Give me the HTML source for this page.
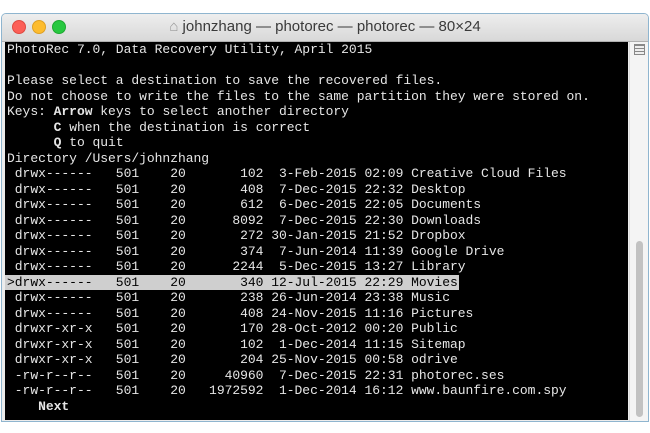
<!DOCTYPE html>
<html><head><meta charset="utf-8"><style>
html,body{margin:0;padding:0;background:#fff;width:650px;height:433px;overflow:hidden}
.win{position:absolute;left:1px;top:13px;width:646px;height:407px;border:1px solid #8fb5cf;border-radius:5px 5px 0 0;background:#ececec;overflow:hidden}
.tb{position:absolute;left:0;top:0;width:646px;height:27px;background:linear-gradient(#eeeeee,#d8d8d8);border-bottom:1px solid #b0b0b0}
.dot{position:absolute;top:6px;width:12px;height:12px;border-radius:50%}
.title{position:absolute;left:0;width:646px;top:4px;text-align:center;font:15px "Liberation Sans",sans-serif;color:#3a3a3a}
.term{position:absolute;left:3px;top:28px;width:623px;height:378px;background:#000}
pre{margin:0;position:absolute;left:2px;top:0;font:13px/15.5px "Liberation Mono",monospace;color:#e6e6e6;letter-spacing:-0.03px}
.hl{background:#cfcfcf;color:#000;display:inline-block;width:452px;margin-left:-2px;padding-left:2px;white-space:pre}
.sb{position:absolute;left:627px;top:28px;width:19px;height:379px;background:#f4f4f4;border-left:1px solid #ddd}
.th{position:absolute;left:634px;top:227px;width:7px;height:176px;border-radius:4px;background:#c2c2c2}
</style></head><body>
<div class="win">
<div class="tb">
<div class="dot" style="left:10px;background:#fc5f57;border:0.5px solid #de4a41"></div>
<div class="dot" style="left:30px;background:#fdbc2e;border:0.5px solid #dea024"></div>
<div class="dot" style="left:50px;background:#28c840;border:0.5px solid #1ea831"></div>
<div class="title"><span style="color:#999">⌂</span> johnzhang — photorec — photorec — 80×24</div>
</div>
<div class="term"><pre>PhotoRec 7.0, Data Recovery Utility, April 2015

Please select a destination to save the recovered files.
Do not choose to write the files to the same partition they were stored on.
Keys: <b>Arrow</b> keys to select another directory
      <b>C</b> when the destination is correct
      <b>Q</b> to quit
Directory /Users/johnzhang
 drwx------   501    20       102  3-Feb-2015 02:09 Creative Cloud Files
 drwx------   501    20       408  7-Dec-2015 22:32 Desktop
 drwx------   501    20       612  6-Dec-2015 22:05 Documents
 drwx------   501    20      8092  7-Dec-2015 22:30 Downloads
 drwx------   501    20       272 30-Jan-2015 21:52 Dropbox
 drwx------   501    20       374  7-Jun-2014 11:39 Google Drive
 drwx------   501    20      2244  5-Dec-2015 13:27 Library
<span class="hl">&gt;drwx------   501    20       340 12-Jul-2015 22:29 Movies</span>
 drwx------   501    20       238 26-Jun-2014 23:38 Music
 drwx------   501    20       408 24-Nov-2015 11:16 Pictures
 drwxr-xr-x   501    20       170 28-Oct-2012 00:20 Public
 drwxr-xr-x   501    20       102  1-Dec-2014 11:15 Sitemap
 drwxr-xr-x   501    20       204 25-Nov-2015 00:58 odrive
 -rw-r--r--   501    20     40960  7-Dec-2015 22:31 photorec.ses
 -rw-r--r--   501    20   1972592  1-Dec-2014 16:12 www.baunfire.com.spy
    <b>Next</b></pre></div>
<div class="sb"></div>
<div style="position:absolute;left:632px;top:30px;width:9px;height:9px;border:1px solid #888;background:repeating-linear-gradient(#888 0 1px,#eee 1px 3px)"></div>
<div class="th"></div>
</div>
</body></html>
